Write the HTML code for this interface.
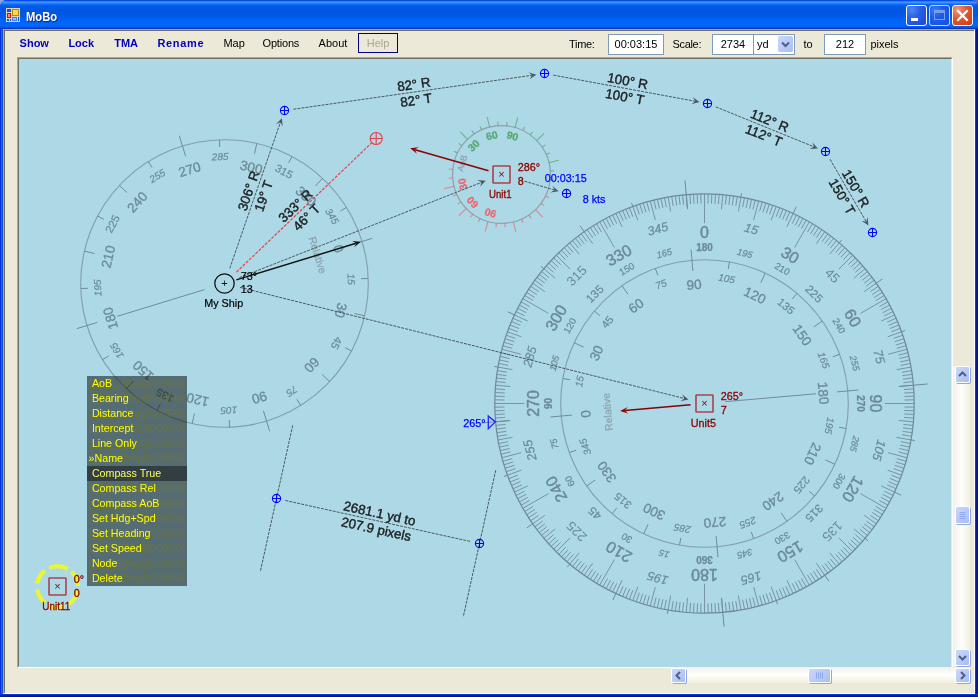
<!DOCTYPE html>
<html><head><meta charset="utf-8"><title>MoBo</title>
<style>
html,body{margin:0;padding:0}
body{width:978px;height:697px;overflow:hidden;position:relative;background:linear-gradient(to right,#8aa4e6,#5568c8);font-family:"Liberation Sans",Arial,sans-serif;font-size:11px;color:#000}
.abs{position:absolute}
#win{left:0;top:0;width:978px;height:697px;background:#0831d9;border-radius:7px 7px 0 0;overflow:hidden}
#title{left:0;top:0;width:978px;height:29px;background:linear-gradient(to bottom,#0446dd 0%,#0a50e6 3%,#3a93ff 6%,#3a93ff 9%,#0a6bf6 15%,#025be8 21%,#0056e2 35%,#0058e6 55%,#0064f6 72%,#0068fc 88%,#0058ea 94%,#0038cc 98%,#0030c0 100%)}
#lb{left:0;top:29px;width:3px;height:668px;background:linear-gradient(to right,#0831d9 0,#0831d9 33%,#166aee 34%,#166aee 66%,#0855dd 67%)}
#rb{left:975px;top:29px;width:3px;height:668px;background:linear-gradient(to right,#0838dc 0,#0838dc 33%,#001ea0 34%,#00138c 100%)}
#bb{left:0;top:694px;width:978px;height:3px;background:linear-gradient(to bottom,#0838dc 0,#0838dc 33%,#001ea0 34%,#00138c 100%)}
#client{left:3px;top:29px;width:972px;height:665px;background:#ece9d8;box-sizing:border-box;border:1px solid;border-color:#aca899 #fff #fff #aca899}
#client2{left:4px;top:30px;width:970px;height:663px;box-sizing:border-box;border-left:1px solid #716f64;border-top:1px solid #716f64}
#ttl{left:26px;top:7.5px;color:#fff;font-weight:bold;font-size:13px;line-height:18px;text-shadow:1px 1px 1px #0a246a;transform:scaleX(0.86);transform-origin:0 0;white-space:nowrap}
.tb{top:5px;width:21px;height:21px;box-sizing:border-box;border:1px solid #fff;border-radius:3px}
.tbb{background:radial-gradient(circle at 25% 20%,#4f86f8 0%,#2a5ee6 40%,#1c48d4 100%)}
.tbx{background:radial-gradient(circle at 25% 20%,#ee9a80 0%,#e2542c 45%,#c83c14 100%)}
.mi{top:36px;line-height:14px;white-space:nowrap}
.mb{font-weight:bold;color:#0000be}
.tx{top:34px;height:21px;box-sizing:border-box;border:1px solid #7f9db9;background:#fff;line-height:19px;text-align:center}
#panel{left:17px;top:57px;width:936px;height:611px;box-sizing:border-box;border:1px solid;border-color:#aca899 #fff #fff #aca899}
#panel2{left:18px;top:58px;width:934px;height:609px;box-sizing:border-box;border:1px solid;border-color:#716f64 #ece9d8 #ece9d8 #716f64}
.sbtn{width:15px;height:16px;box-sizing:border-box;border:1px solid #fff;border-radius:2px;background:linear-gradient(135deg,#cad8fc,#b6c8f6 60%,#a9bdf2);box-shadow:1px 1px 0 #8fa6e0}
.vtrack{background:linear-gradient(to right,#f3f1ec,#fefefb 50%,#f1efe2)}
.htrack{background:linear-gradient(to bottom,#f3f1ec,#fefefb 50%,#f1efe2)}
</style></head><body>
<div id="win" class="abs" style="will-change:transform">
<div id="title" class="abs"></div>
<div id="lb" class="abs"></div><div id="rb" class="abs"></div><div id="bb" class="abs"></div>
<svg class="abs" style="left:6px;top:8px" width="14" height="14" viewBox="0 0 14 14"><rect width="14" height="14" fill="#dcd3b8"/><rect x="1" y="1" width="4" height="3" fill="#0a58e2"/><rect x="1" y="11" width="2" height="2" fill="#0a58e2"/><rect x="4" y="11" width="1" height="2" fill="#0a58e2"/><rect x="12" y="9" width="1" height="4" fill="#0a58e2"/><rect x="1" y="5" width="4" height="5" fill="#c01810"/><rect x="2" y="6" width="2" height="3" fill="#f08a84"/><rect x="6" y="1" width="7" height="7" fill="#b8860e"/><rect x="7" y="2" width="5" height="5" fill="#ffd84a"/><rect x="6" y="9" width="5" height="4" fill="#4f80e0"/><rect x="7" y="10" width="3" height="2" fill="#9cbcff"/></svg>
<div id="ttl" class="abs">MoBo</div>
<div class="abs tb tbb" style="left:906px"><div class="abs" style="left:4px;top:12px;width:7px;height:3px;background:#fff"></div></div>
<div class="abs tb tbb" style="left:929px;opacity:.75"><div class="abs" style="left:4px;top:4px;width:11px;height:10px;box-sizing:border-box;border:1px solid #9fb4ee;border-top:3px solid #9fb4ee"></div></div>
<div class="abs tb tbx" style="left:952px"><svg class="abs" style="left:0;top:0" width="19" height="19"><path d="M4.3 4.3L14.7 14.7M14.7 4.3L4.3 14.7" stroke="#fff" stroke-width="2.3"/></svg></div>
<div id="client" class="abs"></div><div id="client2" class="abs"></div>
<div class="abs mi mb" style="left:19.6px">Show</div>
<div class="abs mi mb" style="left:68.4px">Lock</div>
<div class="abs mi mb" style="left:114.2px">TMA</div>
<div class="abs mi mb" style="left:157.4px;letter-spacing:0.7px">Rename</div>
<div class="abs mi" style="left:223.4px">Map</div>
<div class="abs mi" style="left:262.6px;letter-spacing:-0.2px">Options</div>
<div class="abs mi" style="left:318.6px">About</div>
<div class="abs" style="left:358px;top:33px;width:40px;height:20px;box-sizing:border-box;border:1px solid #000080;color:#aaa69a;text-align:center;line-height:18px">Help</div>
<div class="abs mi" style="left:569px;top:37px;letter-spacing:-0.3px">Time:</div>
<div class="abs tx" style="left:608px;width:56px">00:03:15</div>
<div class="abs mi" style="left:672.4px;top:37px;letter-spacing:-0.3px">Scale:</div>
<div class="abs tx" style="left:712px;width:42px">2734</div>
<div class="abs tx" style="left:753px;width:42px;text-align:left;padding-left:3px">yd<div class="abs" style="left:24px;top:1px;width:15px;height:16px;border-radius:2px;background:linear-gradient(135deg,#cad8fc,#a9bdf2)"><svg width="15" height="16"><path d="M4 6.5L7.5 10L11 6.5" stroke="#4d6185" stroke-width="2" fill="none"/></svg></div></div>
<div class="abs mi" style="left:803.4px;top:37px">to</div>
<div class="abs tx" style="left:824px;width:42px">212</div>
<div class="abs mi" style="left:870.4px;top:37px">pixels</div>
<div id="panel" class="abs"></div><div id="panel2" class="abs"></div>
<svg width="932" height="608" viewBox="19 59 932 608" font-family="Liberation Sans, Arial, sans-serif" style="position:absolute;left:19px;top:59px;background:#add8e6">
<circle cx="224.5" cy="283.5" r="143.8" fill="none" stroke="#819faa" stroke-width="1.1"/>
<path d="M351.69 244.61L372.25 238.33M361.02 278.73L368.21 278.48M354.48 313.51L364.61 315.85M345.11 347.63L351.47 351.01M322.06 374.48L329.67 381.57M296.89 399.34L300.7 405.45M263.39 410.69L269.67 431.25M229.27 420.02L229.52 427.21M194.49 413.48L192.15 423.61M160.37 404.11L156.99 410.47M133.52 381.06L126.43 388.67M108.66 355.89L102.55 359.7M97.31 322.39L76.75 328.67M87.98 288.27L80.79 288.52M94.52 253.49L84.39 251.15M103.89 219.37L97.53 215.99M126.94 192.52L119.33 185.43M152.11 167.66L148.3 161.55M185.61 156.31L179.33 135.75M219.73 146.98L219.48 139.79M254.51 153.52L256.85 143.39M288.63 162.89L292.01 156.53M315.48 185.94L322.57 178.33M340.34 211.11L346.45 207.3" stroke="#6f8d98" stroke-width="1" fill="none"/>
<text transform="translate(338.78 248.56) rotate(73)" y="4.86" font-size="13.5" fill="#6a8b96" text-anchor="middle" stroke="#6a8b96" stroke-width="0.3">0</text>
<text transform="translate(351.42 279.07) rotate(88)" y="3.6" font-size="10" fill="#6a8b96" text-anchor="middle" font-style="italic" stroke="#6a8b96" stroke-width="0.2">15</text>
<text transform="translate(340.94 310.38) rotate(103)" y="4.86" font-size="13.5" fill="#6a8b96" text-anchor="middle" stroke="#6a8b96" stroke-width="0.3">30</text>
<text transform="translate(336.63 343.12) rotate(118)" y="3.96" font-size="11" fill="#6a8b96" text-anchor="middle"  stroke="#6a8b96" stroke-width="0.2">45</text>
<text transform="translate(311.9 365) rotate(133)" y="4.86" font-size="13.5" fill="#6a8b96" text-anchor="middle" stroke="#6a8b96" stroke-width="0.3">60</text>
<text transform="translate(291.8 391.2) rotate(148)" y="3.6" font-size="10" fill="#6a8b96" text-anchor="middle" font-style="italic" stroke="#6a8b96" stroke-width="0.2">75</text>
<text transform="translate(259.44 397.78) rotate(163)" y="4.86" font-size="13.5" fill="#6a8b96" text-anchor="middle" stroke="#6a8b96" stroke-width="0.3">90</text>
<text transform="translate(228.93 410.42) rotate(178)" y="3.6" font-size="10" fill="#6a8b96" text-anchor="middle" font-style="italic" stroke="#6a8b96" stroke-width="0.2">105</text>
<text transform="translate(197.62 399.94) rotate(193)" y="4.86" font-size="13.5" fill="#6a8b96" text-anchor="middle" stroke="#6a8b96" stroke-width="0.3">120</text>
<text transform="translate(164.88 395.63) rotate(208)" y="3.96" font-size="11" fill="#6a8b96" text-anchor="middle"  stroke="#6a8b96" stroke-width="0.2">135</text>
<text transform="translate(143 370.9) rotate(223)" y="4.86" font-size="13.5" fill="#6a8b96" text-anchor="middle" stroke="#6a8b96" stroke-width="0.3">150</text>
<text transform="translate(116.8 350.8) rotate(238)" y="3.6" font-size="10" fill="#6a8b96" text-anchor="middle" font-style="italic" stroke="#6a8b96" stroke-width="0.2">165</text>
<text transform="translate(110.22 318.44) rotate(253)" y="4.86" font-size="13.5" fill="#6a8b96" text-anchor="middle" stroke="#6a8b96" stroke-width="0.3">180</text>
<text transform="translate(97.58 287.93) rotate(268)" y="3.6" font-size="10" fill="#6a8b96" text-anchor="middle" font-style="italic" stroke="#6a8b96" stroke-width="0.2">195</text>
<text transform="translate(108.06 256.62) rotate(283)" y="4.86" font-size="13.5" fill="#6a8b96" text-anchor="middle" stroke="#6a8b96" stroke-width="0.3">210</text>
<text transform="translate(112.37 223.88) rotate(298)" y="3.96" font-size="11" fill="#6a8b96" text-anchor="middle"  stroke="#6a8b96" stroke-width="0.2">225</text>
<text transform="translate(137.1 202) rotate(313)" y="4.86" font-size="13.5" fill="#6a8b96" text-anchor="middle" stroke="#6a8b96" stroke-width="0.3">240</text>
<text transform="translate(157.2 175.8) rotate(328)" y="3.6" font-size="10" fill="#6a8b96" text-anchor="middle" font-style="italic" stroke="#6a8b96" stroke-width="0.2">255</text>
<text transform="translate(189.56 169.22) rotate(343)" y="4.86" font-size="13.5" fill="#6a8b96" text-anchor="middle" stroke="#6a8b96" stroke-width="0.3">270</text>
<text transform="translate(220.07 156.58) rotate(358)" y="3.6" font-size="10" fill="#6a8b96" text-anchor="middle" font-style="italic" stroke="#6a8b96" stroke-width="0.2">285</text>
<text transform="translate(251.38 167.06) rotate(13)" y="4.86" font-size="13.5" fill="#6a8b96" text-anchor="middle" stroke="#6a8b96" stroke-width="0.3">300</text>
<text transform="translate(284.12 171.37) rotate(28)" y="3.96" font-size="11" fill="#6a8b96" text-anchor="middle"  stroke="#6a8b96" stroke-width="0.2">315</text>
<text transform="translate(306 196.1) rotate(43)" y="4.86" font-size="13.5" fill="#6a8b96" text-anchor="middle" stroke="#6a8b96" stroke-width="0.3">330</text>
<text transform="translate(332.2 216.2) rotate(58)" y="3.6" font-size="10" fill="#6a8b96" text-anchor="middle" font-style="italic" stroke="#6a8b96" stroke-width="0.2">345</text>
<text transform="translate(317.74 254.99) rotate(73)" y="3.78" font-size="10.5" fill="#8aa5af" text-anchor="middle"  stroke="#8aa5af" stroke-width="0.2">Relative</text>
<line x1="204.42" y1="289.64" x2="117.39" y2="316.25" stroke="#6f8d98" stroke-width="1" />
<circle cx="704.5" cy="403.5" r="209.7" fill="none" stroke="#6d8a95" stroke-width="1.2"/>
<path d="M704.5 193.8L704.5 223.2M708.16 193.83L707.99 203.53M711.82 193.93L711.48 203.62M715.47 194.09L714.97 203.77M719.13 194.31L718.45 203.99M722.78 194.6L721.5 209.24M726.42 194.95L725.41 204.6M730.06 195.36L728.87 204.99M733.68 195.84L732.33 205.45M737.3 196.38L735.79 205.96M740.91 196.99L738.36 211.46M744.51 197.65L742.66 207.17M748.1 198.38L746.08 207.87M751.67 199.17L749.49 208.63M755.23 200.03L752.88 209.44M758.77 200.95L753.68 219.97M762.3 201.92L759.63 211.25M765.81 202.96L762.97 212.24M769.3 204.06L766.3 213.29M772.77 205.22L769.61 214.4M776.22 206.45L771.19 220.26M779.65 207.73L776.17 216.78M783.06 209.07L779.42 218.06M786.44 210.47L782.65 219.4M789.79 211.93L785.85 220.79M793.12 213.45L786.91 226.77M796.43 215.02L792.17 223.74M799.7 216.66L795.3 225.3M802.95 218.35L798.39 226.91M806.16 220.09L801.46 228.58M809.35 221.89L794.65 247.36M812.5 223.75L807.51 232.07M815.62 225.66L810.48 233.89M818.71 227.63L813.43 235.77M821.76 229.65L816.34 237.69M824.78 231.72L816.35 243.77M827.76 233.85L822.06 241.7M830.7 236.03L824.86 243.77M833.6 238.25L827.63 245.9M836.47 240.53L830.36 248.07M839.29 242.86L829.84 254.12M842.08 245.24L835.71 252.56M844.82 247.66L838.33 254.87M847.52 250.14L840.9 257.23M850.17 252.65L843.43 259.63M852.78 255.22L838.85 269.15M855.35 257.83L848.37 264.57M857.86 260.48L850.77 267.1M860.34 263.18L853.13 269.67M862.76 265.92L855.44 272.29M865.14 268.71L853.88 278.16M867.47 271.53L859.93 277.64M869.75 274.4L862.1 280.37M871.97 277.3L864.23 283.14M874.15 280.24L866.3 285.94M876.28 283.22L864.23 291.65M878.35 286.24L870.31 291.66M880.37 289.29L872.23 294.57M882.34 292.38L874.11 297.52M884.25 295.5L875.93 300.49M886.11 298.65L860.64 313.35M887.91 301.84L879.42 306.54M889.65 305.05L881.09 309.61M891.34 308.3L882.7 312.7M892.98 311.57L884.26 315.83M894.55 314.88L881.23 321.09M896.07 318.21L887.21 322.15M897.53 321.56L888.6 325.35M898.93 324.94L889.94 328.58M900.27 328.35L891.22 331.83M901.55 331.78L887.74 336.81M902.78 335.23L893.6 338.39M903.94 338.7L894.71 341.7M905.04 342.19L895.76 345.03M906.08 345.7L896.75 348.37M907.05 349.23L888.03 354.32M907.97 352.77L898.56 355.12M908.83 356.33L899.37 358.51M909.62 359.9L900.13 361.92M910.35 363.49L900.83 365.34M911.01 367.09L896.54 369.64M911.62 370.7L902.04 372.21M912.16 374.32L902.55 375.67M912.64 377.94L903.01 379.13M913.05 381.58L903.4 382.59M913.4 385.22L898.76 386.5M913.69 388.87L904.01 389.55M913.91 392.53L904.23 393.03M914.07 396.18L904.38 396.52M914.17 399.84L904.47 400.01M914.2 403.5L884.8 403.5M914.17 407.16L904.47 406.99M914.07 410.82L904.38 410.48M913.91 414.47L904.23 413.97M913.69 418.13L904.01 417.45M913.4 421.78L898.76 420.5M913.05 425.42L903.4 424.41M912.64 429.06L903.01 427.87M912.16 432.68L902.55 431.33M911.62 436.3L902.04 434.79M911.01 439.91L896.54 437.36M910.35 443.51L900.83 441.66M909.62 447.1L900.13 445.08M908.83 450.67L899.37 448.49M907.97 454.23L898.56 451.88M907.05 457.77L888.03 452.68M906.08 461.3L896.75 458.63M905.04 464.81L895.76 461.97M903.94 468.3L894.71 465.3M902.78 471.77L893.6 468.61M901.55 475.22L887.74 470.19M900.27 478.65L891.22 475.17M898.93 482.06L889.94 478.42M897.53 485.44L888.6 481.65M896.07 488.79L887.21 484.85M894.55 492.12L881.23 485.91M892.98 495.43L884.26 491.17M891.34 498.7L882.7 494.3M889.65 501.95L881.09 497.39M887.91 505.16L879.42 500.46M886.11 508.35L860.64 493.65M884.25 511.5L875.93 506.51M882.34 514.62L874.11 509.48M880.37 517.71L872.23 512.43M878.35 520.76L870.31 515.34M876.28 523.78L864.23 515.35M874.15 526.76L866.3 521.06M871.97 529.7L864.23 523.86M869.75 532.6L862.1 526.63M867.47 535.47L859.93 529.36M865.14 538.29L853.88 528.84M862.76 541.08L855.44 534.71M860.34 543.82L853.13 537.33M857.86 546.52L850.77 539.9M855.35 549.17L848.37 542.43M852.78 551.78L838.85 537.85M850.17 554.35L843.43 547.37M847.52 556.86L840.9 549.77M844.82 559.34L838.33 552.13M842.08 561.76L835.71 554.44M839.29 564.14L829.84 552.88M836.47 566.47L830.36 558.93M833.6 568.75L827.63 561.1M830.7 570.97L824.86 563.23M827.76 573.15L822.06 565.3M824.78 575.28L816.35 563.23M821.76 577.35L816.34 569.31M818.71 579.37L813.43 571.23M815.62 581.34L810.48 573.11M812.5 583.25L807.51 574.93M809.35 585.11L794.65 559.64M806.16 586.91L801.46 578.42M802.95 588.65L798.39 580.09M799.7 590.34L795.3 581.7M796.43 591.98L792.17 583.26M793.12 593.55L786.91 580.23M789.79 595.07L785.85 586.21M786.44 596.53L782.65 587.6M783.06 597.93L779.42 588.94M779.65 599.27L776.17 590.22M776.22 600.55L771.19 586.74M772.77 601.78L769.61 592.6M769.3 602.94L766.3 593.71M765.81 604.04L762.97 594.76M762.3 605.08L759.63 595.75M758.77 606.05L753.68 587.03M755.23 606.97L752.88 597.56M751.67 607.83L749.49 598.37M748.1 608.62L746.08 599.13M744.51 609.35L742.66 599.83M740.91 610.01L738.36 595.54M737.3 610.62L735.79 601.04M733.68 611.16L732.33 601.55M730.06 611.64L728.87 602.01M726.42 612.05L725.41 602.4M722.78 612.4L721.5 597.76M719.13 612.69L718.45 603.01M715.47 612.91L714.97 603.23M711.82 613.07L711.48 603.38M708.16 613.17L707.99 603.47M704.5 613.2L704.5 583.8M700.84 613.17L701.01 603.47M697.18 613.07L697.52 603.38M693.53 612.91L694.03 603.23M689.87 612.69L690.55 603.01M686.22 612.4L687.5 597.76M682.58 612.05L683.59 602.4M678.94 611.64L680.13 602.01M675.32 611.16L676.67 601.55M671.7 610.62L673.21 601.04M668.09 610.01L670.64 595.54M664.49 609.35L666.34 599.83M660.9 608.62L662.92 599.13M657.33 607.83L659.51 598.37M653.77 606.97L656.12 597.56M650.23 606.05L655.32 587.03M646.7 605.08L649.37 595.75M643.19 604.04L646.03 594.76M639.7 602.94L642.7 593.71M636.23 601.78L639.39 592.6M632.78 600.55L637.81 586.74M629.35 599.27L632.83 590.22M625.94 597.93L629.58 588.94M622.56 596.53L626.35 587.6M619.21 595.07L623.15 586.21M615.88 593.55L622.09 580.23M612.57 591.98L616.83 583.26M609.3 590.34L613.7 581.7M606.05 588.65L610.61 580.09M602.84 586.91L607.54 578.42M599.65 585.11L614.35 559.64M596.5 583.25L601.49 574.93M593.38 581.34L598.52 573.11M590.29 579.37L595.57 571.23M587.24 577.35L592.66 569.31M584.22 575.28L592.65 563.23M581.24 573.15L586.94 565.3M578.3 570.97L584.14 563.23M575.4 568.75L581.37 561.1M572.53 566.47L578.64 558.93M569.71 564.14L579.16 552.88M566.92 561.76L573.29 554.44M564.18 559.34L570.67 552.13M561.48 556.86L568.1 549.77M558.83 554.35L565.57 547.37M556.22 551.78L570.15 537.85M553.65 549.17L560.63 542.43M551.14 546.52L558.23 539.9M548.66 543.82L555.87 537.33M546.24 541.08L553.56 534.71M543.86 538.29L555.12 528.84M541.53 535.47L549.07 529.36M539.25 532.6L546.9 526.63M537.03 529.7L544.77 523.86M534.85 526.76L542.7 521.06M532.72 523.78L544.77 515.35M530.65 520.76L538.69 515.34M528.63 517.71L536.77 512.43M526.66 514.62L534.89 509.48M524.75 511.5L533.07 506.51M522.89 508.35L548.36 493.65M521.09 505.16L529.58 500.46M519.35 501.95L527.91 497.39M517.66 498.7L526.3 494.3M516.02 495.43L524.74 491.17M514.45 492.12L527.77 485.91M512.93 488.79L521.79 484.85M511.47 485.44L520.4 481.65M510.07 482.06L519.06 478.42M508.73 478.65L517.78 475.17M507.45 475.22L521.26 470.19M506.22 471.77L515.4 468.61M505.06 468.3L514.29 465.3M503.96 464.81L513.24 461.97M502.92 461.3L512.25 458.63M501.95 457.77L520.97 452.68M501.03 454.23L510.44 451.88M500.17 450.67L509.63 448.49M499.38 447.1L508.87 445.08M498.65 443.51L508.17 441.66M497.99 439.91L512.46 437.36M497.38 436.3L506.96 434.79M496.84 432.68L506.45 431.33M496.36 429.06L505.99 427.87M495.95 425.42L505.6 424.41M495.6 421.78L510.24 420.5M495.31 418.13L504.99 417.45M495.09 414.47L504.77 413.97M494.93 410.82L504.62 410.48M494.83 407.16L504.53 406.99M494.8 403.5L524.2 403.5M494.83 399.84L504.53 400.01M494.93 396.18L504.62 396.52M495.09 392.53L504.77 393.03M495.31 388.87L504.99 389.55M495.6 385.22L510.24 386.5M495.95 381.58L505.6 382.59M496.36 377.94L505.99 379.13M496.84 374.32L506.45 375.67M497.38 370.7L506.96 372.21M497.99 367.09L512.46 369.64M498.65 363.49L508.17 365.34M499.38 359.9L508.87 361.92M500.17 356.33L509.63 358.51M501.03 352.77L510.44 355.12M501.95 349.23L520.97 354.32M502.92 345.7L512.25 348.37M503.96 342.19L513.24 345.03M505.06 338.7L514.29 341.7M506.22 335.23L515.4 338.39M507.45 331.78L521.26 336.81M508.73 328.35L517.78 331.83M510.07 324.94L519.06 328.58M511.47 321.56L520.4 325.35M512.93 318.21L521.79 322.15M514.45 314.88L527.77 321.09M516.02 311.57L524.74 315.83M517.66 308.3L526.3 312.7M519.35 305.05L527.91 309.61M521.09 301.84L529.58 306.54M522.89 298.65L548.36 313.35M524.75 295.5L533.07 300.49M526.66 292.38L534.89 297.52M528.63 289.29L536.77 294.57M530.65 286.24L538.69 291.66M532.72 283.22L544.77 291.65M534.85 280.24L542.7 285.94M537.03 277.3L544.77 283.14M539.25 274.4L546.9 280.37M541.53 271.53L549.07 277.64M543.86 268.71L555.12 278.16M546.24 265.92L553.56 272.29M548.66 263.18L555.87 269.67M551.14 260.48L558.23 267.1M553.65 257.83L560.63 264.57M556.22 255.22L570.15 269.15M558.83 252.65L565.57 259.63M561.48 250.14L568.1 257.23M564.18 247.66L570.67 254.87M566.92 245.24L573.29 252.56M569.71 242.86L579.16 254.12M572.53 240.53L578.64 248.07M575.4 238.25L581.37 245.9M578.3 236.03L584.14 243.77M581.24 233.85L586.94 241.7M584.22 231.72L592.65 243.77M587.24 229.65L592.66 237.69M590.29 227.63L595.57 235.77M593.38 225.66L598.52 233.89M596.5 223.75L601.49 232.07M599.65 221.89L614.35 247.36M602.84 220.09L607.54 228.58M606.05 218.35L610.61 226.91M609.3 216.66L613.7 225.3M612.57 215.02L616.83 223.74M615.88 213.45L622.09 226.77M619.21 211.93L623.15 220.79M622.56 210.47L626.35 219.4M625.94 209.07L629.58 218.06M629.35 207.73L632.83 216.78M632.78 206.45L637.81 220.26M636.23 205.22L639.39 214.4M639.7 204.06L642.7 213.29M643.19 202.96L646.03 212.24M646.7 201.92L649.37 211.25M650.23 200.95L655.32 219.97M653.77 200.03L656.12 209.44M657.33 199.17L659.51 208.63M660.9 198.38L662.92 207.87M664.49 197.65L666.34 207.17M668.09 196.99L670.64 211.46M671.7 196.38L673.21 205.96M675.32 195.84L676.67 205.45M678.94 195.36L680.13 204.99M682.58 194.95L683.59 204.6M686.22 194.6L687.5 209.24M689.87 194.31L690.55 203.99M693.53 194.09L694.03 203.77M697.18 193.93L697.52 203.62M700.84 193.83L701.01 203.53" stroke="#6f8d98" stroke-width="0.9" fill="none"/>
<text transform="translate(704.5 232) rotate(0)" y="5.76" font-size="16" fill="#6a8b96" text-anchor="middle" stroke="#6a8b96" stroke-width="0.45">0</text>
<text transform="translate(704.5 247.7) rotate(0)" y="3.6" font-size="10" fill="#6a8b96" text-anchor="middle" font-weight="bold" stroke="#6a8b96" stroke-width="0.25">180</text>
<text transform="translate(751.35 228.67) rotate(15)" y="4.5" font-size="12.5" fill="#6a8b96" text-anchor="middle" font-style="italic" stroke="#6a8b96" stroke-width="0.2">15</text>
<text transform="translate(744.77 253.2) rotate(15)" y="3.35" font-size="9.3" fill="#6a8b96" text-anchor="middle" font-style="italic" stroke="#6a8b96" stroke-width="0.2">195</text>
<text transform="translate(790.25 254.98) rotate(30)" y="5.76" font-size="16" fill="#6a8b96" text-anchor="middle" stroke="#6a8b96" stroke-width="0.45">30</text>
<text transform="translate(782.3 268.75) rotate(30)" y="3.42" font-size="9.5" fill="#6a8b96" text-anchor="middle"  stroke="#6a8b96" stroke-width="0.2">210</text>
<text transform="translate(832.49 275.51) rotate(45)" y="4.75" font-size="13.2" fill="#6a8b96" text-anchor="middle" >45</text>
<text transform="translate(814.31 293.69) rotate(45)" y="4.14" font-size="11.5" fill="#6a8b96" text-anchor="middle"  stroke="#6a8b96" stroke-width="0.2">225</text>
<text transform="translate(853.02 317.75) rotate(60)" y="5.76" font-size="16" fill="#6a8b96" text-anchor="middle" stroke="#6a8b96" stroke-width="0.45">60</text>
<text transform="translate(839.25 325.7) rotate(60)" y="3.42" font-size="9.5" fill="#6a8b96" text-anchor="middle"  stroke="#6a8b96" stroke-width="0.2">240</text>
<text transform="translate(879.33 356.65) rotate(75)" y="4.5" font-size="12.5" fill="#6a8b96" text-anchor="middle" font-style="italic" stroke="#6a8b96" stroke-width="0.2">75</text>
<text transform="translate(854.8 363.23) rotate(75)" y="3.35" font-size="9.3" fill="#6a8b96" text-anchor="middle" font-style="italic" stroke="#6a8b96" stroke-width="0.2">255</text>
<text transform="translate(876 403.5) rotate(90)" y="5.76" font-size="16" fill="#6a8b96" text-anchor="middle" stroke="#6a8b96" stroke-width="0.45">90</text>
<text transform="translate(860.3 403.5) rotate(90)" y="3.6" font-size="10" fill="#6a8b96" text-anchor="middle" font-weight="bold" stroke="#6a8b96" stroke-width="0.25">270</text>
<text transform="translate(879.33 450.35) rotate(105)" y="4.5" font-size="12.5" fill="#6a8b96" text-anchor="middle" font-style="italic" stroke="#6a8b96" stroke-width="0.2">105</text>
<text transform="translate(854.8 443.77) rotate(105)" y="3.35" font-size="9.3" fill="#6a8b96" text-anchor="middle" font-style="italic" stroke="#6a8b96" stroke-width="0.2">285</text>
<text transform="translate(853.02 489.25) rotate(120)" y="5.76" font-size="16" fill="#6a8b96" text-anchor="middle" stroke="#6a8b96" stroke-width="0.45">120</text>
<text transform="translate(839.25 481.3) rotate(120)" y="3.42" font-size="9.5" fill="#6a8b96" text-anchor="middle"  stroke="#6a8b96" stroke-width="0.2">300</text>
<text transform="translate(832.49 531.49) rotate(135)" y="4.75" font-size="13.2" fill="#6a8b96" text-anchor="middle" >135</text>
<text transform="translate(814.31 513.31) rotate(135)" y="4.14" font-size="11.5" fill="#6a8b96" text-anchor="middle"  stroke="#6a8b96" stroke-width="0.2">315</text>
<text transform="translate(790.25 552.02) rotate(150)" y="5.76" font-size="16" fill="#6a8b96" text-anchor="middle" stroke="#6a8b96" stroke-width="0.45">150</text>
<text transform="translate(782.3 538.25) rotate(150)" y="3.42" font-size="9.5" fill="#6a8b96" text-anchor="middle"  stroke="#6a8b96" stroke-width="0.2">330</text>
<text transform="translate(751.35 578.33) rotate(165)" y="4.5" font-size="12.5" fill="#6a8b96" text-anchor="middle" font-style="italic" stroke="#6a8b96" stroke-width="0.2">165</text>
<text transform="translate(744.77 553.8) rotate(165)" y="3.35" font-size="9.3" fill="#6a8b96" text-anchor="middle" font-style="italic" stroke="#6a8b96" stroke-width="0.2">345</text>
<text transform="translate(704.5 575) rotate(180)" y="5.76" font-size="16" fill="#6a8b96" text-anchor="middle" stroke="#6a8b96" stroke-width="0.45">180</text>
<text transform="translate(704.5 559.3) rotate(180)" y="3.6" font-size="10" fill="#6a8b96" text-anchor="middle" font-weight="bold" stroke="#6a8b96" stroke-width="0.25">360</text>
<text transform="translate(657.65 578.33) rotate(195)" y="4.5" font-size="12.5" fill="#6a8b96" text-anchor="middle" font-style="italic" stroke="#6a8b96" stroke-width="0.2">195</text>
<text transform="translate(664.23 553.8) rotate(195)" y="3.35" font-size="9.3" fill="#6a8b96" text-anchor="middle" font-style="italic" stroke="#6a8b96" stroke-width="0.2">15</text>
<text transform="translate(618.75 552.02) rotate(210)" y="5.76" font-size="16" fill="#6a8b96" text-anchor="middle" stroke="#6a8b96" stroke-width="0.45">210</text>
<text transform="translate(626.7 538.25) rotate(210)" y="3.42" font-size="9.5" fill="#6a8b96" text-anchor="middle"  stroke="#6a8b96" stroke-width="0.2">30</text>
<text transform="translate(576.51 531.49) rotate(225)" y="4.75" font-size="13.2" fill="#6a8b96" text-anchor="middle" >225</text>
<text transform="translate(594.69 513.31) rotate(225)" y="4.14" font-size="11.5" fill="#6a8b96" text-anchor="middle"  stroke="#6a8b96" stroke-width="0.2">45</text>
<text transform="translate(555.98 489.25) rotate(240)" y="5.76" font-size="16" fill="#6a8b96" text-anchor="middle" stroke="#6a8b96" stroke-width="0.45">240</text>
<text transform="translate(569.75 481.3) rotate(240)" y="3.42" font-size="9.5" fill="#6a8b96" text-anchor="middle"  stroke="#6a8b96" stroke-width="0.2">60</text>
<text transform="translate(529.67 450.35) rotate(255)" y="4.5" font-size="12.5" fill="#6a8b96" text-anchor="middle" font-style="italic" stroke="#6a8b96" stroke-width="0.2">255</text>
<text transform="translate(554.2 443.77) rotate(255)" y="3.35" font-size="9.3" fill="#6a8b96" text-anchor="middle" font-style="italic" stroke="#6a8b96" stroke-width="0.2">75</text>
<text transform="translate(533 403.5) rotate(270)" y="5.76" font-size="16" fill="#6a8b96" text-anchor="middle" stroke="#6a8b96" stroke-width="0.45">270</text>
<text transform="translate(548.7 403.5) rotate(270)" y="3.6" font-size="10" fill="#6a8b96" text-anchor="middle" font-weight="bold" stroke="#6a8b96" stroke-width="0.25">90</text>
<text transform="translate(529.67 356.65) rotate(285)" y="4.5" font-size="12.5" fill="#6a8b96" text-anchor="middle" font-style="italic" stroke="#6a8b96" stroke-width="0.2">285</text>
<text transform="translate(554.2 363.23) rotate(285)" y="3.35" font-size="9.3" fill="#6a8b96" text-anchor="middle" font-style="italic" stroke="#6a8b96" stroke-width="0.2">105</text>
<text transform="translate(555.98 317.75) rotate(300)" y="5.76" font-size="16" fill="#6a8b96" text-anchor="middle" stroke="#6a8b96" stroke-width="0.45">300</text>
<text transform="translate(569.75 325.7) rotate(300)" y="3.42" font-size="9.5" fill="#6a8b96" text-anchor="middle"  stroke="#6a8b96" stroke-width="0.2">120</text>
<text transform="translate(576.51 275.51) rotate(315)" y="4.75" font-size="13.2" fill="#6a8b96" text-anchor="middle" >315</text>
<text transform="translate(594.69 293.69) rotate(315)" y="4.14" font-size="11.5" fill="#6a8b96" text-anchor="middle"  stroke="#6a8b96" stroke-width="0.2">135</text>
<text transform="translate(618.75 254.98) rotate(330)" y="5.76" font-size="16" fill="#6a8b96" text-anchor="middle" stroke="#6a8b96" stroke-width="0.45">330</text>
<text transform="translate(626.7 268.75) rotate(330)" y="3.42" font-size="9.5" fill="#6a8b96" text-anchor="middle"  stroke="#6a8b96" stroke-width="0.2">150</text>
<text transform="translate(657.65 228.67) rotate(345)" y="4.5" font-size="12.5" fill="#6a8b96" text-anchor="middle" font-style="italic" stroke="#6a8b96" stroke-width="0.2">345</text>
<text transform="translate(664.23 253.2) rotate(345)" y="3.35" font-size="9.3" fill="#6a8b96" text-anchor="middle" font-style="italic" stroke="#6a8b96" stroke-width="0.2">165</text>
<circle cx="704.5" cy="403.5" r="143.8" fill="none" stroke="#819faa" stroke-width="1.1"/>
<path d="M572.01 415.09L550.59 416.97M509.25 420.58L481.35 423.02M569.98 379.78L562.88 378.53M498.68 367.21L494.24 366.43M583.6 347.12L574.17 342.73M515.08 315.17L507.83 311.79M599.86 315.7L594.34 311.07M544.4 269.16L540.95 266.26M627.98 294.23L622.02 285.71M584.62 232.3L580.03 225.74M657.78 275.14L655.32 268.37M633.02 207.1L631.48 202.88M692.91 271.01L691.03 249.59M687.42 208.25L684.98 180.35M728.22 268.98L729.47 261.88M740.79 197.68L741.57 193.24M760.88 282.6L765.27 273.17M792.83 214.08L796.21 206.83M792.3 298.86L796.93 293.34M838.84 243.4L841.74 239.95M813.77 326.98L822.29 321.02M875.7 283.62L882.26 279.03M832.86 356.78L839.63 354.32M900.9 332.02L905.12 330.48M836.99 391.91L858.41 390.03M899.75 386.42L927.65 383.98M839.02 427.22L846.12 428.47M910.32 439.79L914.76 440.57M825.4 459.88L834.83 464.27M893.92 491.83L901.17 495.21M809.14 491.3L814.66 495.93M864.6 537.84L868.05 540.74M781.02 512.77L786.98 521.29M824.38 574.7L828.97 581.26M751.22 531.86L753.68 538.63M775.98 599.9L777.52 604.12M716.09 535.99L717.97 557.41M721.58 598.75L724.02 626.65M680.78 538.02L679.53 545.12M668.21 609.32L667.43 613.76M648.12 524.4L643.73 533.83M616.17 592.92L612.79 600.17M616.7 508.14L612.07 513.66M570.16 563.6L567.26 567.05M595.23 480.02L586.71 485.98M533.3 523.38L526.74 527.97M576.14 450.22L569.37 452.68M508.1 474.98L503.88 476.52" stroke="#6f8d98" stroke-width="1" fill="none"/>
<text transform="translate(585.45 413.92) rotate(265)" y="4.86" font-size="13.5" fill="#6a8b96" text-anchor="middle" stroke="#6a8b96" stroke-width="0.3">0</text>
<text transform="translate(579.43 381.45) rotate(280)" y="3.6" font-size="10" fill="#6a8b96" text-anchor="middle" font-style="italic" stroke="#6a8b96" stroke-width="0.2">15</text>
<text transform="translate(596.2 353) rotate(295)" y="4.86" font-size="13.5" fill="#6a8b96" text-anchor="middle" stroke="#6a8b96" stroke-width="0.3">30</text>
<text transform="translate(607.21 321.87) rotate(310)" y="3.96" font-size="11" fill="#6a8b96" text-anchor="middle"  stroke="#6a8b96" stroke-width="0.2">45</text>
<text transform="translate(635.96 305.61) rotate(325)" y="4.86" font-size="13.5" fill="#6a8b96" text-anchor="middle" stroke="#6a8b96" stroke-width="0.3">60</text>
<text transform="translate(661.06 284.16) rotate(340)" y="3.6" font-size="10" fill="#6a8b96" text-anchor="middle" font-style="italic" stroke="#6a8b96" stroke-width="0.2">75</text>
<text transform="translate(694.08 284.45) rotate(355)" y="4.86" font-size="13.5" fill="#6a8b96" text-anchor="middle" stroke="#6a8b96" stroke-width="0.3">90</text>
<text transform="translate(726.55 278.43) rotate(10)" y="3.6" font-size="10" fill="#6a8b96" text-anchor="middle" font-style="italic" stroke="#6a8b96" stroke-width="0.2">105</text>
<text transform="translate(755 295.2) rotate(25)" y="4.86" font-size="13.5" fill="#6a8b96" text-anchor="middle" stroke="#6a8b96" stroke-width="0.3">120</text>
<text transform="translate(786.13 306.21) rotate(40)" y="3.96" font-size="11" fill="#6a8b96" text-anchor="middle"  stroke="#6a8b96" stroke-width="0.2">135</text>
<text transform="translate(802.39 334.96) rotate(55)" y="4.86" font-size="13.5" fill="#6a8b96" text-anchor="middle" stroke="#6a8b96" stroke-width="0.3">150</text>
<text transform="translate(823.84 360.06) rotate(70)" y="3.6" font-size="10" fill="#6a8b96" text-anchor="middle" font-style="italic" stroke="#6a8b96" stroke-width="0.2">165</text>
<text transform="translate(823.55 393.08) rotate(85)" y="4.86" font-size="13.5" fill="#6a8b96" text-anchor="middle" stroke="#6a8b96" stroke-width="0.3">180</text>
<text transform="translate(829.57 425.55) rotate(100)" y="3.6" font-size="10" fill="#6a8b96" text-anchor="middle" font-style="italic" stroke="#6a8b96" stroke-width="0.2">195</text>
<text transform="translate(812.8 454) rotate(115)" y="4.86" font-size="13.5" fill="#6a8b96" text-anchor="middle" stroke="#6a8b96" stroke-width="0.3">210</text>
<text transform="translate(801.79 485.13) rotate(130)" y="3.96" font-size="11" fill="#6a8b96" text-anchor="middle"  stroke="#6a8b96" stroke-width="0.2">225</text>
<text transform="translate(773.04 501.39) rotate(145)" y="4.86" font-size="13.5" fill="#6a8b96" text-anchor="middle" stroke="#6a8b96" stroke-width="0.3">240</text>
<text transform="translate(747.94 522.84) rotate(160)" y="3.6" font-size="10" fill="#6a8b96" text-anchor="middle" font-style="italic" stroke="#6a8b96" stroke-width="0.2">255</text>
<text transform="translate(714.92 522.55) rotate(175)" y="4.86" font-size="13.5" fill="#6a8b96" text-anchor="middle" stroke="#6a8b96" stroke-width="0.3">270</text>
<text transform="translate(682.45 528.57) rotate(190)" y="3.6" font-size="10" fill="#6a8b96" text-anchor="middle" font-style="italic" stroke="#6a8b96" stroke-width="0.2">285</text>
<text transform="translate(654 511.8) rotate(205)" y="4.86" font-size="13.5" fill="#6a8b96" text-anchor="middle" stroke="#6a8b96" stroke-width="0.3">300</text>
<text transform="translate(622.87 500.79) rotate(220)" y="3.96" font-size="11" fill="#6a8b96" text-anchor="middle"  stroke="#6a8b96" stroke-width="0.2">315</text>
<text transform="translate(606.61 472.04) rotate(235)" y="4.86" font-size="13.5" fill="#6a8b96" text-anchor="middle" stroke="#6a8b96" stroke-width="0.3">330</text>
<text transform="translate(585.16 446.94) rotate(250)" y="3.6" font-size="10" fill="#6a8b96" text-anchor="middle" font-style="italic" stroke="#6a8b96" stroke-width="0.2">345</text>
<text transform="translate(607.37 412) rotate(265)" y="3.78" font-size="10.5" fill="#8aa5af" text-anchor="middle"  stroke="#8aa5af" stroke-width="0.2">Relative</text>
<line x1="725.42" y1="401.67" x2="816.07" y2="393.74" stroke="#6f8d98" stroke-width="1" />
<circle cx="501.5" cy="174.5" r="48.9" fill="none" stroke="#8aa3ad" stroke-width="1.2"/>
<path d="M457.55 153.06L453.95 151.31M461.94 145.76L458.7 143.41M467.53 139.32L460.38 131.92M474.16 133.96L471.92 130.64M481.61 129.83L479.98 126.17M489.67 127.05L487.18 117.06M498.09 125.72L497.81 121.73M506.61 125.87L507.03 121.89M514.98 127.49L517.82 117.59M522.94 130.55L524.69 126.95M530.24 134.94L532.59 131.7M536.68 140.53L544.08 133.38M542.04 147.16L545.36 144.92M546.17 154.61L549.83 152.98M548.95 162.67L558.94 160.18M550.28 171.09L554.27 170.81M550.13 179.61L554.11 180.03" stroke="#55a86f" stroke-width="1.1" fill="none" opacity="0.75"/>
<path d="M452.87 169.39L448.89 168.97M452.72 177.91L448.73 178.19M454.05 186.33L444.06 188.82M456.83 194.39L453.17 196.02M460.96 201.84L457.64 204.08M466.32 208.47L458.92 215.62M472.76 214.06L470.41 217.3M480.06 218.45L478.31 222.05M488.02 221.51L485.18 231.41M496.39 223.13L495.97 227.11M504.91 223.28L505.19 227.27M513.33 221.95L515.82 231.94M521.39 219.17L523.02 222.83M528.84 215.04L531.08 218.36M535.47 209.68L542.62 217.08M541.06 203.24L544.3 205.59M545.45 195.94L549.05 197.69" stroke="#ef6470" stroke-width="1.1" fill="none" opacity="0.7"/>
<text transform="translate(473.57 145.58) rotate(316)" y="3.78" font-size="10.5" fill="#55a86f" text-anchor="middle" font-weight="bold" stroke="#55a86f" stroke-width="0.25">30</text>
<text transform="translate(462.49 184.23) rotate(256)" y="3.78" font-size="10.5" fill="#ef6470" text-anchor="middle" font-weight="bold" stroke="#ef6470" stroke-width="0.25">30</text>
<text transform="translate(491.77 135.49) rotate(346)" y="3.78" font-size="10.5" fill="#55a86f" text-anchor="middle" font-weight="bold" stroke="#55a86f" stroke-width="0.25">60</text>
<text transform="translate(472.58 202.43) rotate(226)" y="3.78" font-size="10.5" fill="#ef6470" text-anchor="middle" font-weight="bold" stroke="#ef6470" stroke-width="0.25">60</text>
<text transform="translate(512.58 135.86) rotate(16)" y="3.78" font-size="10.5" fill="#55a86f" text-anchor="middle" font-weight="bold" stroke="#55a86f" stroke-width="0.25">90</text>
<text transform="translate(490.42 213.14) rotate(196)" y="3.78" font-size="10.5" fill="#ef6470" text-anchor="middle" font-weight="bold" stroke="#ef6470" stroke-width="0.25">90</text>
<text transform="translate(462.09 163.2) rotate(286)" y="3.17" font-size="8.8" fill="#8aa3ad" text-anchor="middle"  stroke="#8aa3ad" stroke-width="0.2">AoB</text>
<line x1="229.74" y1="268.38" x2="280.67" y2="121.55" stroke="#4b5a60" stroke-width="1" stroke-dasharray="3 1.05"/>
<path transform="translate(281.81 118.25) rotate(-70.87)" d="M0 0L-7.5 -3.6L-4.2 0L-7.5 3.6Z" fill="#4b5a60"/>
<g transform="translate(255.78 193.32) rotate(-70.87)" font-size="13.33" fill="#1c1f21" stroke="#1c1f21" stroke-width="0.4" text-anchor="middle"><text y="-3.1">306° R</text><text y="12.9">19° T</text></g>
<line x1="236.43" y1="272.1" x2="371.5" y2="142.99" stroke="#e8404d" stroke-width="1.2" stroke-dasharray="3 1.4"/>
<g transform="translate(300.75 211.4) rotate(-43.71)" font-size="13.33" fill="#1c1f21" stroke="#1c1f21" stroke-width="0.4" text-anchor="middle"><text y="-3.1">333° R</text><text y="12.9">46° T</text></g>
<line x1="239.39" y1="277.64" x2="482.42" y2="182.01" stroke="#4b5a60" stroke-width="1" stroke-dasharray="3 1.05"/>
<path transform="translate(485.68 180.72) rotate(-21.48)" d="M0 0L-7.5 -3.6L-4.2 0L-7.5 3.6Z" fill="#4b5a60"/>
<line x1="240.02" y1="287.38" x2="685.1" y2="398.65" stroke="#4b5a60" stroke-width="1" stroke-dasharray="3 1.05"/>
<path transform="translate(688.49 399.5) rotate(14.04)" d="M0 0L-7.5 -3.6L-4.2 0L-7.5 3.6Z" fill="#4b5a60"/>
<line x1="293.41" y1="109.23" x2="532.92" y2="75.15" stroke="#4b5a60" stroke-width="1" stroke-dasharray="3 1.05"/>
<path transform="translate(536.38 74.66) rotate(-8.1)" d="M0 0L-7.5 -3.6L-4.2 0L-7.5 3.6Z" fill="#4b5a60"/>
<g transform="translate(414.9 91.94) rotate(-8.1)" font-size="13.33" fill="#1c1f21" stroke="#1c1f21" stroke-width="0.4" text-anchor="middle"><text y="-3.1">82° R</text><text y="12.9">82° T</text></g>
<line x1="553.35" y1="75.13" x2="695.99" y2="101.38" stroke="#4b5a60" stroke-width="1" stroke-dasharray="3 1.05"/>
<path transform="translate(699.44 102.02) rotate(10.43)" d="M0 0L-7.5 -3.6L-4.2 0L-7.5 3.6Z" fill="#4b5a60"/>
<g transform="translate(626.39 88.57) rotate(10.43)" font-size="13.33" fill="#1c1f21" stroke="#1c1f21" stroke-width="0.4" text-anchor="middle"><text y="-3.1">100° R</text><text y="12.9">100° T</text></g>
<line x1="715.84" y1="106.89" x2="814.66" y2="147.09" stroke="#4b5a60" stroke-width="1" stroke-dasharray="3 1.05"/>
<path transform="translate(817.9 148.41) rotate(22.14)" d="M0 0L-7.5 -3.6L-4.2 0L-7.5 3.6Z" fill="#4b5a60"/>
<g transform="translate(766.87 127.65) rotate(22.14)" font-size="13.33" fill="#1c1f21" stroke="#1c1f21" stroke-width="0.4" text-anchor="middle"><text y="-3.1">112° R</text><text y="12.9">112° T</text></g>
<line x1="830.02" y1="159.28" x2="866.63" y2="222.38" stroke="#4b5a60" stroke-width="1" stroke-dasharray="3 1.05"/>
<path transform="translate(868.38 225.41) rotate(59.88)" d="M0 0L-7.5 -3.6L-4.2 0L-7.5 3.6Z" fill="#4b5a60"/>
<g transform="translate(849.2 192.35) rotate(59.88)" font-size="13.33" fill="#1c1f21" stroke="#1c1f21" stroke-width="0.4" text-anchor="middle"><text y="-3.1">150° R</text><text y="12.9">150° T</text></g>
<line x1="524.54" y1="181.23" x2="555.27" y2="190.22" stroke="#4b5a60" stroke-width="1" stroke-dasharray="3 1.05"/>
<path transform="translate(558.63 191.2) rotate(16.29)" d="M0 0L-7.5 -3.6L-4.2 0L-7.5 3.6Z" fill="#4b5a60"/>
<line x1="285.29" y1="500.45" x2="470.71" y2="541.55" stroke="#4b5a60" stroke-width="1" stroke-dasharray="3 1.05"/>
<g transform="translate(378 521) rotate(12.5)" font-size="13.33" fill="#1c1f21" stroke="#1c1f21" stroke-width="0.4" text-anchor="middle"><text y="-3.1">2681.1 yd to</text><text y="12.9">207.9 pixels</text></g>
<line x1="292.73" y1="425.28" x2="260.27" y2="571.72" stroke="#4b5a60" stroke-width="1" stroke-dasharray="3 1.05"/>
<line x1="495.73" y1="470.28" x2="463.27" y2="616.72" stroke="#4b5a60" stroke-width="1" stroke-dasharray="3 1.05"/>
<g stroke="#0000ff" stroke-width="1.1" fill="none"><circle cx="284.5" cy="110.5" r="4.1"/><path d="M280.4 110.5H288.6M284.5 106.4V114.6"/></g>
<g stroke="#0000ff" stroke-width="1.1" fill="none"><circle cx="544.5" cy="73.5" r="4.1"/><path d="M540.4 73.5H548.6M544.5 69.4V77.6"/></g>
<g stroke="#0000ff" stroke-width="1.1" fill="none"><circle cx="707.5" cy="103.5" r="4.1"/><path d="M703.4 103.5H711.6M707.5 99.4V107.6"/></g>
<g stroke="#0000ff" stroke-width="1.1" fill="none"><circle cx="825.5" cy="151.5" r="4.1"/><path d="M821.4 151.5H829.6M825.5 147.4V155.6"/></g>
<g stroke="#0000ff" stroke-width="1.1" fill="none"><circle cx="872.5" cy="232.5" r="4.1"/><path d="M868.4 232.5H876.6M872.5 228.4V236.6"/></g>
<g stroke="#0000ff" stroke-width="1.1" fill="none"><circle cx="566.5" cy="193.5" r="4.1"/><path d="M562.4 193.5H570.6M566.5 189.4V197.6"/></g>
<g stroke="#0000ff" stroke-width="1.1" fill="none"><circle cx="276.5" cy="498.5" r="4.1"/><path d="M272.4 498.5H280.6M276.5 494.4V502.6"/></g>
<g stroke="#0000ff" stroke-width="1.1" fill="none"><circle cx="479.5" cy="543.5" r="4.1"/><path d="M475.4 543.5H483.6M479.5 539.4V547.6"/></g>
<g stroke="#e8404d" stroke-width="1.1" fill="none"><circle cx="376.2" cy="138.5" r="6"/><path d="M370.2 138.5H382.2M376.2 132.5V144.5"/></g>
<line x1="236.36" y1="279.87" x2="356.09" y2="243.27" stroke="#111" stroke-width="1.45" />
<path transform="translate(360.87 241.81) rotate(-17)" d="M0 0L-8 -3.3L-4.6 0L-8 3.3Z" fill="#111"/>
<line x1="488.52" y1="170.78" x2="414.99" y2="149.69" stroke="#8b0000" stroke-width="1.45" />
<path transform="translate(410.18 148.31) rotate(196)" d="M0 0L-8 -3.3L-4.6 0L-8 3.3Z" fill="#8b0000"/>
<line x1="690.55" y1="404.72" x2="625.1" y2="410.45" stroke="#8b0000" stroke-width="1.45" />
<path transform="translate(620.12 410.88) rotate(175)" d="M0 0L-8 -3.3L-4.6 0L-8 3.3Z" fill="#8b0000"/>
<circle cx="224.5" cy="283.5" r="9.7" fill="none" stroke="#111" stroke-width="1.3"/>
<text x="224.5" y="286.9" font-size="11" fill="#111" text-anchor="middle">+</text>
<g font-size="10.8" fill="#000" stroke="#000" stroke-width="0.2"><text x="240.7" y="279.6">73°</text><text x="240.7" y="293.4">13</text><text x="223.7" y="306.7" text-anchor="middle">My Ship</text></g>
<rect x="493" y="166" width="17" height="17" rx="0.6" fill="none" stroke="#a9434c" stroke-width="1.6"/>
<text x="501.5" y="177.9" font-size="11" fill="#8b0000" text-anchor="middle">×</text>
<g font-size="10.8" fill="#8b0000" stroke="#8b0000" stroke-width="0.3"><text x="517.7" y="170.6">286°</text><text x="517.7" y="184.5">8</text><text x="500.3" y="197.7" text-anchor="middle" textLength="22.4" lengthAdjust="spacingAndGlyphs">Unit1</text></g>
<rect x="696" y="395" width="17" height="17" rx="0.6" fill="none" stroke="#a9434c" stroke-width="1.6"/>
<text x="704.5" y="406.9" font-size="11" fill="#8b0000" text-anchor="middle">×</text>
<g font-size="10.8" fill="#8b0000" stroke="#8b0000" stroke-width="0.3"><text x="720.7" y="399.6">265°</text><text x="720.7" y="413.5">7</text><text x="703.3" y="426.7" text-anchor="middle">Unit5</text></g>
<path d="M49.26 567.97A20.5 20.5 0 0 1 67.85 568.95M71.58 571.71A20.5 20.5 0 0 1 78.09 585.98M77.72 590.61A20.5 20.5 0 0 1 68.46 604.08M64.27 606.08A20.5 20.5 0 0 1 47.98 604.8M44.98 602.85A20.5 20.5 0 0 1 37.3 589.55M37.35 583.49A20.5 20.5 0 0 1 44.98 570.55" fill="none" stroke="rgba(255,255,0,0.75)" stroke-width="4.3"/>
<rect x="49" y="578" width="17" height="17" rx="0.6" fill="none" stroke="#a9434c" stroke-width="1.6"/>
<text x="57.5" y="589.9" font-size="11" fill="#8b0000" text-anchor="middle">×</text>
<g font-size="10.8" fill="#8b0000" stroke="#8b0000" stroke-width="0.3"><text x="73.7" y="582.6">0°</text><text x="73.7" y="596.5">0</text><text x="56.3" y="609.7" text-anchor="middle" textLength="28" lengthAdjust="spacingAndGlyphs">Unit11</text></g>
<g font-size="10.8" fill="#0000ff" stroke="#0000ff" stroke-width="0.25"><text x="544.7" y="181.8">00:03:15</text><text x="582.7" y="203.3">8 kts</text><text x="463.3" y="427">265°</text></g>
<path d="M488.3 416L495.4 421.9L488.3 428.8Z" fill="none" stroke="#2323ff" stroke-width="1.3"/>
<rect x="87" y="376" width="100" height="210" fill="rgba(0,0,0,0.5)"/>
<rect x="87" y="466" width="100" height="15" fill="rgba(0,0,0,0.42)"/>
<g font-size="10.67" fill="#808000" opacity="0.42">
<text x="89" y="387.2" textLength="96" lengthAdjust="spacingAndGlyphs">[_][_][_]@0g@0|000XX</text>
<text x="89" y="402.2" textLength="96" lengthAdjust="spacingAndGlyphs">[_][_][_]@0g@0|000XX</text>
<text x="89" y="417.2" textLength="96" lengthAdjust="spacingAndGlyphs">[_][_][_]@0g@0|000XX</text>
<text x="89" y="432.2" textLength="96" lengthAdjust="spacingAndGlyphs">[_][_][_]@0g@0|000XX</text>
<text x="89" y="447.2" textLength="96" lengthAdjust="spacingAndGlyphs">[_][_][_]@0g@0|000XX</text>
<text x="89" y="462.2" textLength="96" lengthAdjust="spacingAndGlyphs">[_][_][_]@0g@0|000XX</text>
<text x="89" y="492.2" textLength="96" lengthAdjust="spacingAndGlyphs">[_][_][_]@0g@0|000XX</text>
<text x="89" y="507.2" textLength="96" lengthAdjust="spacingAndGlyphs">[_][_][_]@0g@0|000XX</text>
<text x="89" y="522.2" textLength="96" lengthAdjust="spacingAndGlyphs">[_][_][_]@0g@0|000XX</text>
<text x="89" y="537.2" textLength="96" lengthAdjust="spacingAndGlyphs">[_][_][_]@0g@0|000XX</text>
<text x="89" y="552.2" textLength="96" lengthAdjust="spacingAndGlyphs">[_][_][_]@0g@0|000XX</text>
<text x="89" y="567.2" textLength="96" lengthAdjust="spacingAndGlyphs">[_][_][_]@0g@0|000XX</text>
<text x="89" y="582.2" textLength="96" lengthAdjust="spacingAndGlyphs">[_][_][_]@0g@0|000XX</text>
</g>
<g font-size="10.67" fill="#ffff00">
<text x="91.9" y="387.2">AoB</text>
<text x="91.9" y="402.2">Bearing</text>
<text x="91.9" y="417.2">Distance</text>
<text x="91.9" y="432.2">Intercept</text>
<text x="91.9" y="447.2">Line Only</text>
<text x="88.6" y="462.2">»Name</text>
<text x="91.9" y="477.2" fill="#ffff55">Compass True</text>
<text x="91.9" y="492.2">Compass Rel</text>
<text x="91.9" y="507.2">Compass AoB</text>
<text x="91.9" y="522.2">Set Hdg+Spd</text>
<text x="91.9" y="537.2">Set Heading</text>
<text x="91.9" y="552.2">Set Speed</text>
<text x="91.9" y="567.2">Node</text>
<text x="91.9" y="582.2">Delete</text>
</g>
</svg>
<div class="abs vtrack" style="left:953px;top:366px;width:17px;height:300px"></div>
<div class="abs htrack" style="left:671px;top:667px;width:299px;height:16px"></div>
<div class="abs sbtn" style="left:955px;top:366px;height:17px"><svg width="13" height="15"><path d="M3 9L6.5 5.5L10 9" stroke="#4d6185" stroke-width="2" fill="none"/></svg></div>
<div class="abs sbtn" style="left:955px;top:649px;height:17px"><svg width="13" height="15"><path d="M3 6L6.5 9.5L10 6" stroke="#4d6185" stroke-width="2" fill="none"/></svg></div>
<div class="abs sbtn" style="left:955px;top:506px;height:18px"><svg width="13" height="16"><path d="M3.5 5.5h6M3.5 7.5h6M3.5 9.5h6M3.5 11.5h6" stroke="#8fa8f0" stroke-width="1" fill="none"/></svg></div>
<div class="abs sbtn" style="left:671px;top:668px;height:15px"><svg width="13" height="13"><path d="M8 3L4.5 6.5L8 10" stroke="#4d6185" stroke-width="2" fill="none"/></svg></div>
<div class="abs sbtn" style="left:955px;top:668px;height:15px"><svg width="13" height="13"><path d="M5 3L8.5 6.5L5 10" stroke="#4d6185" stroke-width="2" fill="none"/></svg></div>
<div class="abs sbtn" style="left:808px;top:668px;width:23px;height:15px"><svg width="21" height="13"><path d="M7.5 3.5v6M9.5 3.5v6M11.5 3.5v6M13.5 3.5v6" stroke="#8fa8f0" stroke-width="1" fill="none"/></svg></div>
</div>
</body></html>
